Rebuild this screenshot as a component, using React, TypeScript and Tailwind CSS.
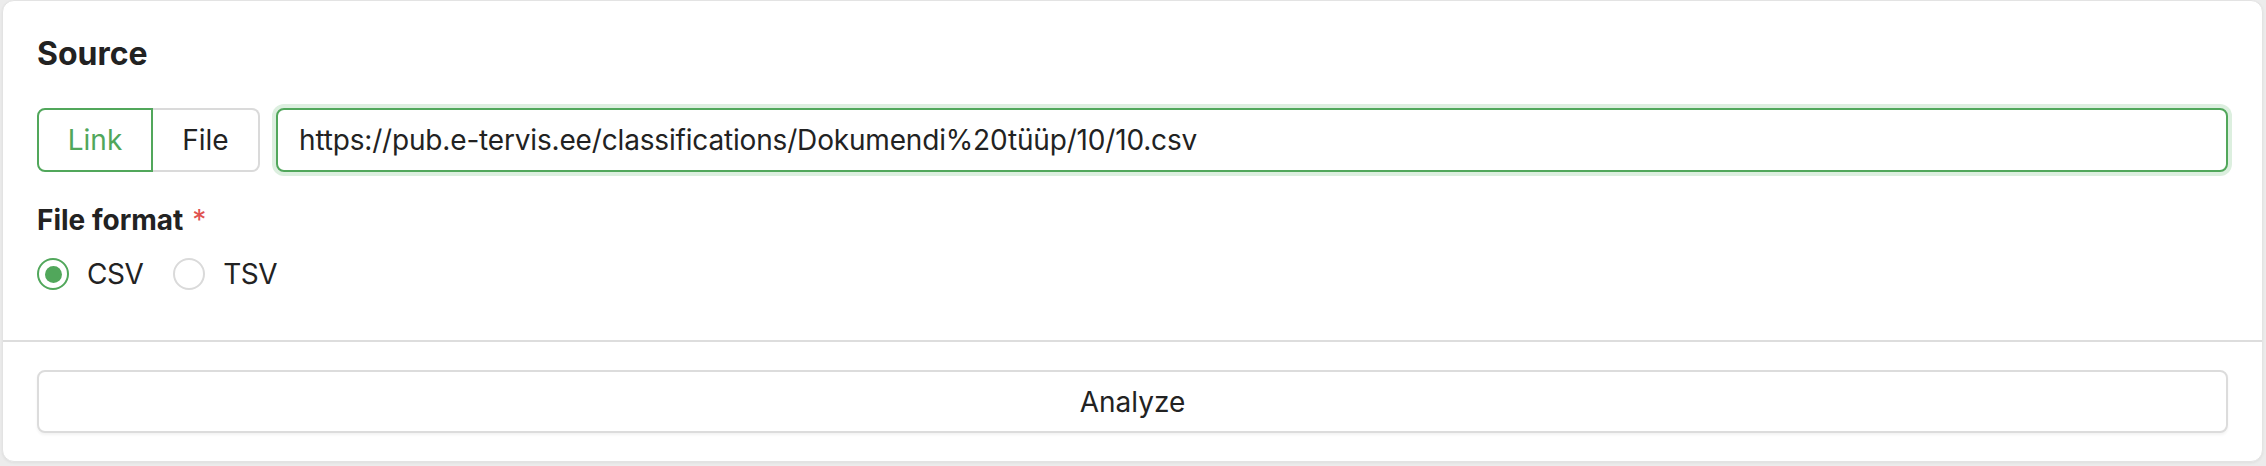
import React from "react";

export default function App() {
  return (
    <div className="w-[2266px] h-[466px] bg-[#ececec] pl-[2px] pr-[3px] font-['Inter','Liberation_Sans',sans-serif] text-[#222222]">
      <div className="h-[462px] bg-white rounded-[12px] border border-[#e3e3e3] shadow-[0_1px_3px_rgba(0,0,0,0.06)] flex flex-col">
        <div className="pt-[33px] px-[34px] pb-[48px] border-b-2 border-[#dddddd]">
          <h2 className="text-[32px] leading-[40px] font-bold">Source</h2>
          <div className="mt-[34px] flex h-[64px] gap-[16px]">
            <div className="flex">
              <button className="w-[116px] h-full border-2 border-[#51a75b] rounded-l-[8px] text-[#51a75b] text-[28px] bg-white">
                Link
              </button>
              <button className="w-[107px] h-full border-2 border-l-0 border-[#dadada] rounded-r-[8px] text-[28px] bg-white">
                File
              </button>
            </div>
            <input
              readOnly
              value="https://pub.e-tervis.ee/classifications/Dokumendi%20tüüp/10/10.csv"
              className="flex-1 h-full border-2 border-[#51a75b] rounded-[8px] ring-4 ring-[#dcefdf] pl-[21px] text-[28px] tracking-[-0.17px] text-[#222222] outline-none bg-white"
            />
          </div>
          <div className="mt-[30px] text-[28px] leading-[36px] font-bold">
            File format
            <span className="text-[#e0524f] font-normal ml-[9px]">*</span>
          </div>
          <div className="mt-[18px] flex h-[36px] items-center text-[28px]">
            <div className="flex items-center">
              <span className="w-[32px] h-[32px] rounded-full border-2 border-[#51a75b] flex items-center justify-center">
                <span className="w-[17px] h-[17px] rounded-full bg-[#51a75b]" />
              </span>
              <span className="ml-[18px] tracking-[-0.5px]">CSV</span>
            </div>
            <div className="flex items-center ml-[30px]">
              <span className="w-[32px] h-[32px] rounded-full border-2 border-[#dadada]" />
              <span className="ml-[18px] tracking-[-0.5px]">TSV</span>
            </div>
          </div>
        </div>
        <div className="pt-[28px] px-[34px]">
          <button className="w-full h-[63px] border-2 border-[#dcdcdc] rounded-[8px] bg-white text-[28px] shadow-[0_2px_3px_rgba(0,0,0,0.05)]">
            Analyze
          </button>
        </div>
      </div>
    </div>
  );
}
